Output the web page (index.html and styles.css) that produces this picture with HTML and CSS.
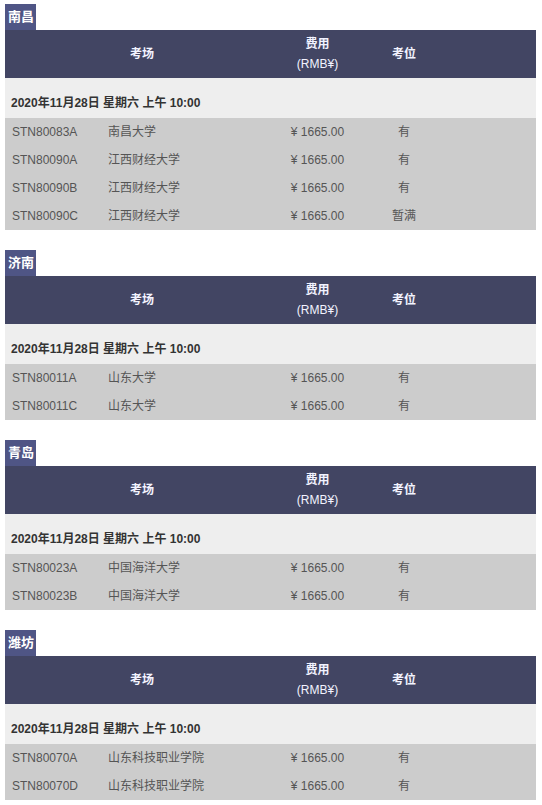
FILE: index.html
```html
<!DOCTYPE html>
<html lang="zh">
<head>
<meta charset="utf-8">
<link rel="stylesheet" href="styles.css">
</head>
<body>
<div class="page">
  <section class="city">
    <div class="label">南昌</div>
    <div class="table">
      <div class="row head">
        <div class="c-site">考场</div>
        <div class="c-fee"><b>费用</b><br>(RMB¥)</div>
        <div class="c-seat">考位</div>
        <div></div>
      </div>
      <div class="row date"><div class="date-text">2020年11月28日 星期六 上午 10:00</div></div>
      <div class="row item"><div class="c-code">STN80083A</div><div class="c-name">南昌大学</div><div class="c-fee">¥ 1665.00</div><div class="c-seat">有</div><div></div></div>
      <div class="row item"><div class="c-code">STN80090A</div><div class="c-name">江西财经大学</div><div class="c-fee">¥ 1665.00</div><div class="c-seat">有</div><div></div></div>
      <div class="row item"><div class="c-code">STN80090B</div><div class="c-name">江西财经大学</div><div class="c-fee">¥ 1665.00</div><div class="c-seat">有</div><div></div></div>
      <div class="row item"><div class="c-code">STN80090C</div><div class="c-name">江西财经大学</div><div class="c-fee">¥ 1665.00</div><div class="c-seat">暂满</div><div></div></div>
    </div>
  </section>

  <section class="city">
    <div class="label">济南</div>
    <div class="table">
      <div class="row head">
        <div class="c-site">考场</div>
        <div class="c-fee"><b>费用</b><br>(RMB¥)</div>
        <div class="c-seat">考位</div>
        <div></div>
      </div>
      <div class="row date"><div class="date-text">2020年11月28日 星期六 上午 10:00</div></div>
      <div class="row item"><div class="c-code">STN80011A</div><div class="c-name">山东大学</div><div class="c-fee">¥ 1665.00</div><div class="c-seat">有</div><div></div></div>
      <div class="row item"><div class="c-code">STN80011C</div><div class="c-name">山东大学</div><div class="c-fee">¥ 1665.00</div><div class="c-seat">有</div><div></div></div>
    </div>
  </section>

  <section class="city">
    <div class="label">青岛</div>
    <div class="table">
      <div class="row head">
        <div class="c-site">考场</div>
        <div class="c-fee"><b>费用</b><br>(RMB¥)</div>
        <div class="c-seat">考位</div>
        <div></div>
      </div>
      <div class="row date"><div class="date-text">2020年11月28日 星期六 上午 10:00</div></div>
      <div class="row item"><div class="c-code">STN80023A</div><div class="c-name">中国海洋大学</div><div class="c-fee">¥ 1665.00</div><div class="c-seat">有</div><div></div></div>
      <div class="row item"><div class="c-code">STN80023B</div><div class="c-name">中国海洋大学</div><div class="c-fee">¥ 1665.00</div><div class="c-seat">有</div><div></div></div>
    </div>
  </section>

  <section class="city">
    <div class="label">潍坊</div>
    <div class="table">
      <div class="row head">
        <div class="c-site">考场</div>
        <div class="c-fee"><b>费用</b><br>(RMB¥)</div>
        <div class="c-seat">考位</div>
        <div></div>
      </div>
      <div class="row date"><div class="date-text">2020年11月28日 星期六 上午 10:00</div></div>
      <div class="row item"><div class="c-code">STN80070A</div><div class="c-name">山东科技职业学院</div><div class="c-fee">¥ 1665.00</div><div class="c-seat">有</div><div></div></div>
      <div class="row item"><div class="c-code">STN80070D</div><div class="c-name">山东科技职业学院</div><div class="c-fee">¥ 1665.00</div><div class="c-seat">有</div><div></div></div>
    </div>
  </section>
</div>
</body>
</html>
```

FILE: styles.css
```css
html, body {
  margin: 0;
  padding: 0;
  background: #ffffff;
}

body {
  font-family: "Liberation Sans", Arial, "Noto Sans CJK SC", sans-serif;
  font-size: 12px;
  color: #555555;
}

.page {
  padding: 4px 6px 0 5px;
}

.city {
  margin-bottom: 20px;
}

.label {
  display: inline-block;
  height: 26px;
  line-height: 26px;
  padding: 0 2px 0 3px;
  background: #4f5585;
  color: #ffffff;
  font-weight: bold;
  font-size: 13px;
  vertical-align: top;
}

.table {
  display: flex;
  flex-direction: column;
}

.row {
  display: grid;
  grid-template-columns: 96px 178px 76px 98px 1fr;
  align-items: center;
}

.head {
  height: 48px;
  background: #424563;
  color: #f2f3ff;
  line-height: 20px;
  text-align: center;
}

.head .c-site {
  grid-column: 1 / span 2;
  font-weight: bold;
}

.head .c-fee {
  padding-left: 1px;
}

.head .c-seat {
  font-weight: bold;
}

.date {
  display: flex;
  align-items: flex-end;
  height: 40px;
  box-sizing: border-box;
  padding: 0 0 6px 6px;
  background: #eeeeee;
}

.date-text {
  line-height: 18px;
  font-weight: bold;
  color: #333333;
}

.item {
  height: 28px;
  background: #cccccc;
  line-height: 28px;
}

.c-code {
  padding-left: 7px;
}

.c-name {
  padding-left: 7px;
}

.item .c-fee {
  text-align: center;
  padding-left: 1px;
}

.item .c-seat {
  text-align: center;
}
```
